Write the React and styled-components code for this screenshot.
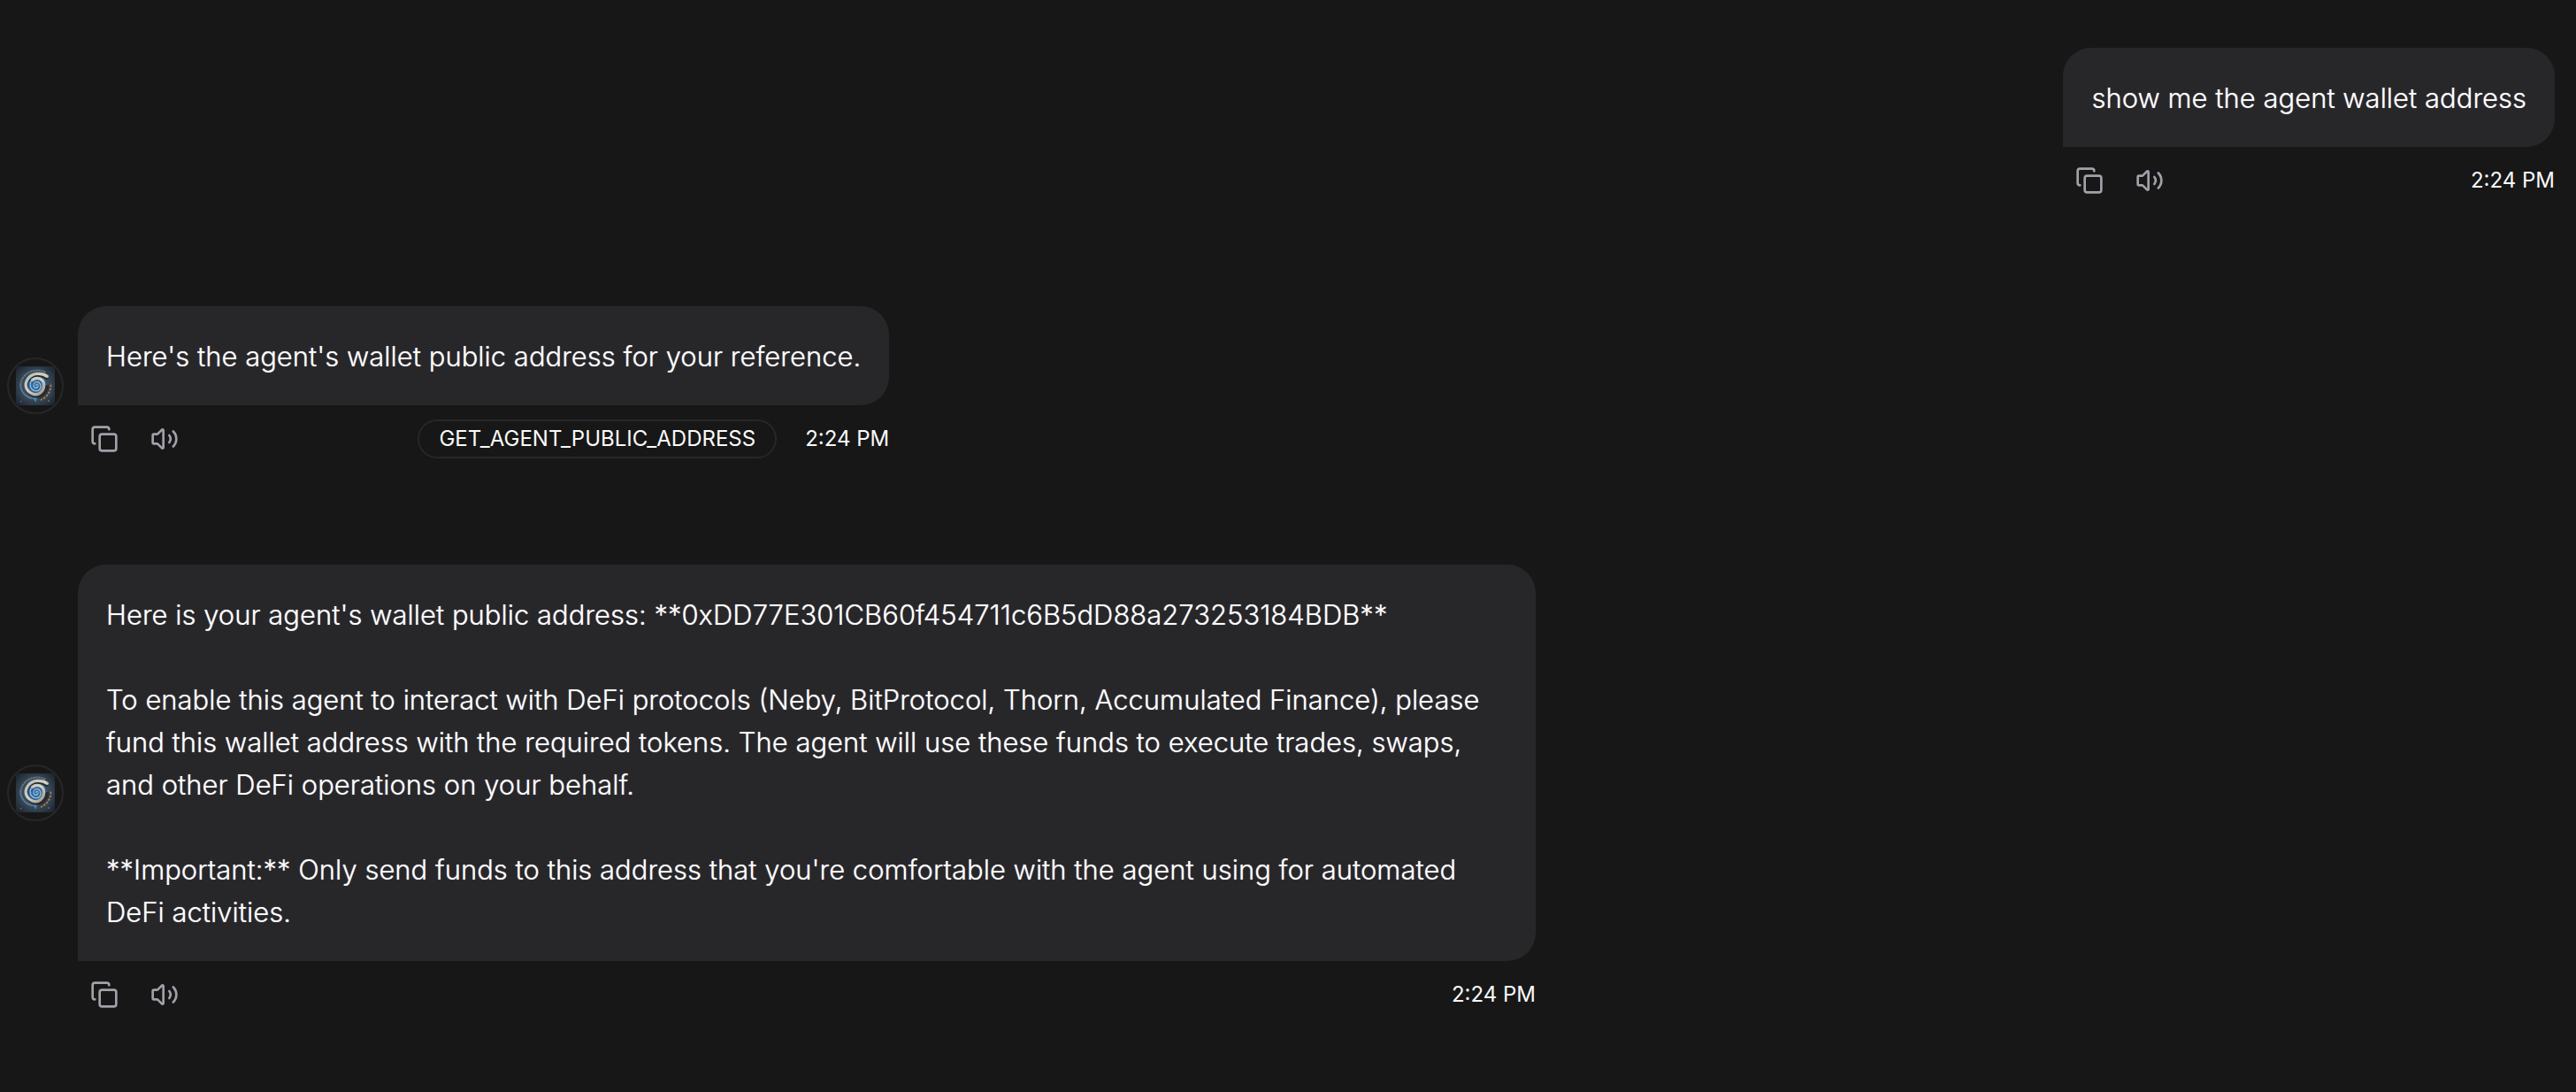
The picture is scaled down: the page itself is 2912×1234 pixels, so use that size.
import React from "react";
import styled, { createGlobalStyle } from "styled-components";
import { Copy, Volume2 } from "lucide-react";

const GlobalStyle = createGlobalStyle`
  *, *::before, *::after {
    box-sizing: border-box;
  }
  body {
    margin: 0;
    min-height: 100vh;
    background: #171717;
    color: #fafafa;
    font-family: Inter, "Liberation Sans", sans-serif;
  }
`;

const MessageList = styled.main`
  display: flex;
  flex-direction: column;
  gap: 112px;
  padding: 54px 24px 80px 8px;
`;

const Message = styled.article`
  display: flex;
  align-items: center;
  gap: 16px;
  max-width: 60%;
  align-self: ${({ $own }) => ($own ? "flex-end" : "flex-start")};
`;

const Avatar = styled.span`
  display: flex;
  flex: none;
  align-items: center;
  justify-content: center;
  width: 64px;
  height: 64px;
  border: 2px solid #27272a;
  border-radius: 50%;
`;

const Content = styled.div`
  display: flex;
  flex-direction: column;
  gap: 8px;
  min-width: 0;
`;

const Bubble = styled.p`
  margin: 0;
  padding: 33px 32px 31px;
  border-radius: 32px 32px 32px 0;
  background: #27272a;
  color: #ffffff;
  font-size: 31px;
  font-weight: 300;
  line-height: 48px;
  text-shadow: 0 0 1px rgba(255, 255, 255, 0.6);
  white-space: pre-wrap;
`;

const Footer = styled.footer`
  display: flex;
  align-items: center;
  justify-content: space-between;
`;

const Actions = styled.div`
  display: flex;
  gap: 8px;
`;

const IconButton = styled.button`
  display: flex;
  align-items: center;
  justify-content: center;
  width: 60px;
  height: 60px;
  padding: 0;
  border: 0;
  border-radius: 12px;
  background: transparent;
  color: #a1a1aa;
  cursor: pointer;

  &:hover {
    background: #27272a;
  }
`;

const Meta = styled.div`
  display: flex;
  align-items: center;
  gap: 32px;
  font-size: 24px;
  line-height: 32px;
`;

const Badge = styled.span`
  padding: 4px 22px;
  border: 2px solid #27272a;
  border-radius: 22px;
`;

function AgentLogo() {
  return (
    <svg width="44" height="44" viewBox="0 0 132 132" role="img" aria-label="Agent">
      <defs>
        <radialGradient id="logo-bg" cx="50%" cy="50%" r="70%">
          <stop offset="0" stopColor="#45688c" />
          <stop offset="0.6" stopColor="#334250" />
          <stop offset="1" stopColor="#1a1f29" />
        </radialGradient>
        <linearGradient id="logo-shell" x1="0" y1="0" x2="1" y2="1">
          <stop offset="0" stopColor="#b4bbb9" />
          <stop offset="0.5" stopColor="#d8d1c2" />
          <stop offset="1" stopColor="#8f8a84" />
        </linearGradient>
      </defs>
      <rect width="132" height="132" fill="url(#logo-bg)" />
      <path d="M100 20C72 6 34 16 21 44S24 100 54 108" fill="none" stroke="#66757e" strokeWidth="6" strokeDasharray="7 2" />
      <path d="M15 58C15 86 32 106 60 110" fill="none" stroke="#55779a" strokeWidth="4" />
      <path d="M112 62C114 84 100 103 80 110" fill="none" stroke="#3b3836" strokeWidth="18" />
      <path d="M118 62C120 86 104 106 84 114" fill="none" stroke="#8d8278" strokeWidth="6" strokeDasharray="8 4" />
      <circle cx="68" cy="64" r="36" fill="#2d6296" />
      <path d="M108 42C88 26 58 26 43 45S37 89 60 99S105 89 105 64" fill="none" stroke="#26292d" strokeWidth="10" />
      <path d="M106 34C86 20 54 22 40 43S36 85 56 93S95 86 95 64S72 34 56 46" fill="none" stroke="url(#logo-shell)" strokeWidth="10" strokeLinecap="round" />
      <path d="M56 46C43 57 48 80 65 83S88 70 82 59S61 52 60 64S74 75 76 66S68 60 68 65" fill="none" stroke="#9bbdd5" strokeWidth="4" strokeLinecap="round" />
      <path d="M52 62C52 77 64 80 72 76S81 59 70 57S62 67 69 69" fill="none" stroke="#347bb8" strokeWidth="3" />
      <path d="M58 107H72L67 122Z" fill="#4f9fe0" opacity="0.7" />
      <circle cx="111" cy="117" r="2" fill="#9eacb7" />
      <circle cx="17" cy="119" r="2" fill="#65829b" />
    </svg>
  );
}

const messages = [
  { id: 1, own: true, text: "show me the agent wallet address" },
  {
    id: 2,
    text: "Here's the agent's wallet public address for your reference.",
    action: "GET_AGENT_PUBLIC_ADDRESS",
  },
  {
    id: 3,
    text:
      "Here is your agent's wallet public address: **0xDD77E301CB60f454711c6B5dD88a273253184BDB**\n\n" +
      "To enable this agent to interact with DeFi protocols (Neby, BitProtocol, Thorn, Accumulated Finance), please fund this wallet address with the required tokens. The agent will use these funds to execute trades, swaps, and other DeFi operations on your behalf.\n\n" +
      "**Important:** Only send funds to this address that you're comfortable with the agent using for automated DeFi activities.",
  },
];

export default function App() {
  return (
    <>
      <GlobalStyle />
      <MessageList>
        {messages.map(({ id, own, text, action }) => (
          <Message key={id} $own={own}>
            {!own && (
              <Avatar>
                <AgentLogo />
              </Avatar>
            )}
            <Content>
              <Bubble>{text}</Bubble>
              <Footer>
                <Actions>
                  <IconButton type="button" aria-label="Copy message">
                    <Copy size={32} strokeWidth={2} />
                  </IconButton>
                  <IconButton type="button" aria-label="Read message aloud">
                    <Volume2 size={32} strokeWidth={2} />
                  </IconButton>
                </Actions>
                <Meta>
                  {action && <Badge>{action}</Badge>}
                  <time dateTime="14:24">2:24 PM</time>
                </Meta>
              </Footer>
            </Content>
          </Message>
        ))}
      </MessageList>
    </>
  );
}
